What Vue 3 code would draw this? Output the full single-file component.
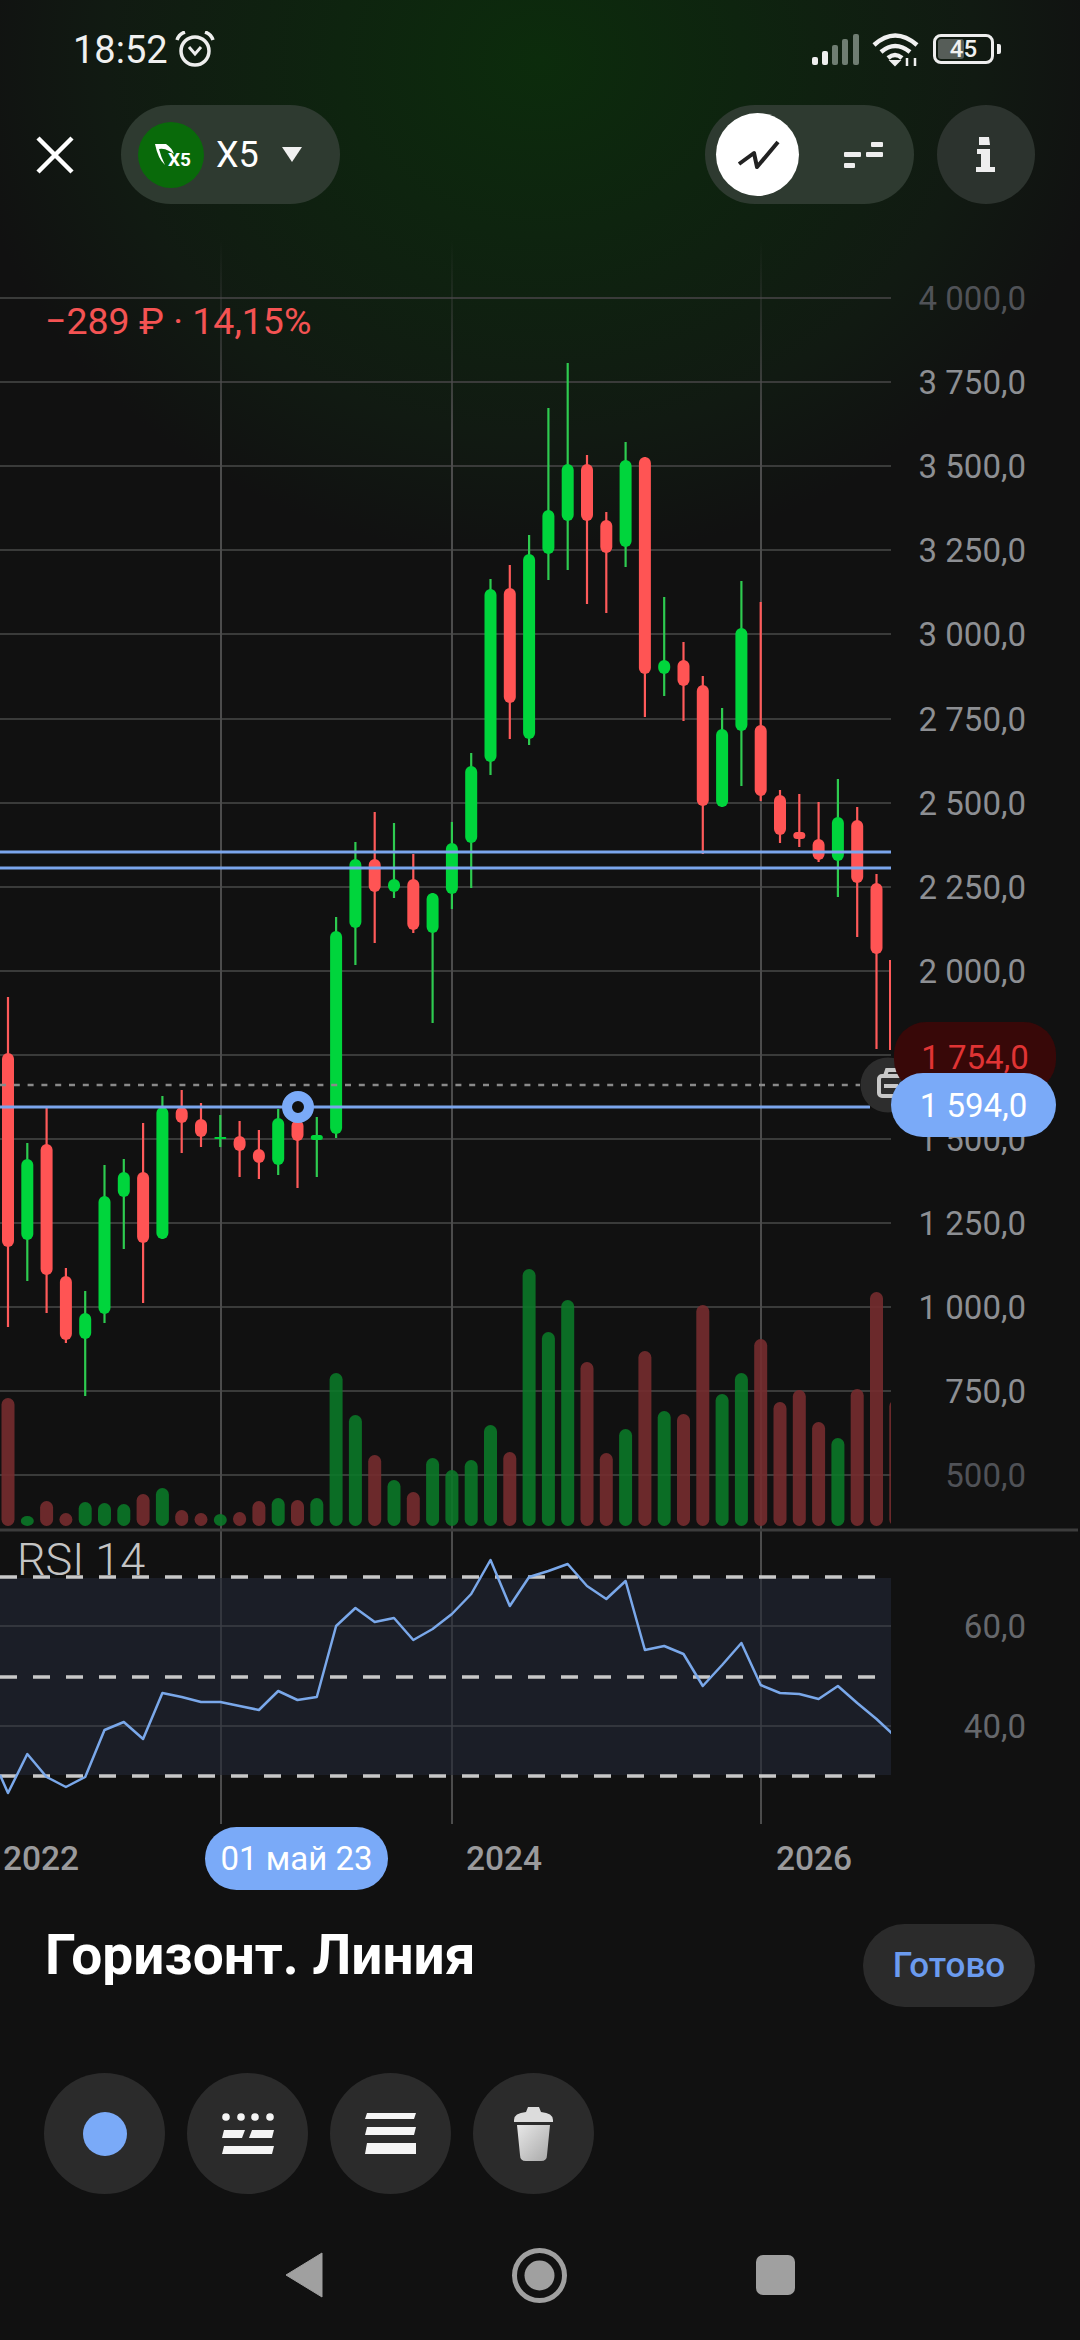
<template>
  <div class="screen">
    <!-- status bar -->
    <div class="status-bar">
      <div class="status-left">
        <span class="clock">18:52</span>
        <svg class="alarm" width="42" height="37" viewBox="0 0 42 37" fill="none" stroke="#eee">
          <circle cx="21" cy="20" r="14" stroke-width="3.5" />
          <path d="M15 16l6 7 6-7" stroke-width="3" />
          <path d="M3 9 Q5 3 11 1" stroke-width="3.5" />
          <path d="M39 9 Q37 3 31 1" stroke-width="3.5" />
        </svg>
      </div>
      <div class="status-right">
        <svg width="48" height="32" viewBox="0 0 48 32">
          <rect x="1" y="24" width="6" height="8" rx="2" fill="#eee" />
          <rect x="11" y="18" width="6" height="14" rx="2" fill="#eee" />
          <rect x="21" y="12" width="6" height="20" rx="2" fill="#6f7d72" />
          <rect x="31" y="6" width="6" height="26" rx="2" fill="#6f7d72" />
          <rect x="42" y="1" width="6" height="31" rx="2" fill="#6f7d72" />
        </svg>
        <svg class="wifi" width="48" height="34" viewBox="0 0 48 34" fill="none" stroke="#f0f0f0" stroke-width="4.5">
          <path d="M2 12 Q23 -7 45 12" />
          <path d="M9 19 Q23 7 38 19" />
          <path d="M16 25 Q23 19 30 25" />
          <path d="M19 28 L23 32 L27 28 Z" fill="#f0f0f0" stroke-width="2" />
          <path d="M35 25 V33 M43 25 V33" stroke-width="2.5" />
        </svg>
        <div class="battery">
          <div class="battery-body">
            <div class="battery-fill"></div>
            <span class="battery-text">45</span>
          </div>
          <div class="battery-tip"></div>
        </div>
      </div>
    </div>

    <!-- top bar -->
    <div class="top-bar">
      <svg class="close" width="40" height="38" viewBox="0 0 40 38">
        <path d="M3 2 L37 36 M37 2 L3 36" stroke="#fff" stroke-width="4.5" />
      </svg>
      <div class="ticker">
        <svg class="logo" width="66" height="66" viewBox="0 0 66 66">
          <circle cx="33" cy="33" r="33" fill="#096a0a" />
          <path d="M17 22 H28 Q34 26 36 32 L31 29 Q26 26 21 27 Q23 35 27 43 Q20 37 17 22 Z" fill="#fff" />
          <text x="30" y="44" class="logo-text">X5</text>
        </svg>
        <span class="ticker-name">X5</span>
        <span class="ticker-caret"></span>
      </div>
      <div class="segment">
        <div class="segment-on">
          <svg width="44" height="34" viewBox="0 0 44 34" fill="none">
            <path d="M3 26 L18 15 L21 29 L42 4" stroke="#222" stroke-width="4" stroke-linejoin="round" />
          </svg>
        </div>
        <svg class="segment-off" width="40" height="26" viewBox="0 0 40 26" fill="#eee">
          <rect x="27" y="0" width="12" height="5" rx="1" />
          <rect x="0" y="10" width="17" height="5" rx="1" />
          <rect x="22" y="10" width="17" height="5" rx="1" />
          <rect x="0" y="21" width="11" height="5" rx="1" />
        </svg>
      </div>
      <div class="info">
        <svg width="20" height="36" viewBox="0 0 20 36" fill="#eee">
          <path d="M3 0 H13 L14 8 H3 Z" />
          <path d="M1 12 H14 V30 H19 V35 H0 V30 H5 V17 H1 Z" />
        </svg>
      </div>
    </div>

    <!-- chart canvas, in screen coordinates -->
    <div class="chart">
      <svg class="chart-svg" width="1080" height="1620" viewBox="0 204 1080 1620">
        <defs>
          <clipPath id="plot"><rect x="0" y="204" width="891" height="1620" /></clipPath>
          <linearGradient id="vfade" gradientUnits="userSpaceOnUse" x1="0" y1="240" x2="0" y2="440">
            <stop offset="0" stop-color="#4c4c4c" stop-opacity="0" />
            <stop offset="1" stop-color="#4c4c4c" />
          </linearGradient>
        </defs>

        <line v-for="l in yLabels" :key="'g' + l.y" x1="0" x2="891" :y1="l.y" :y2="l.y" class="grid" />
        <line v-for="x in [221, 452, 761]" :key="x" :x1="x" :x2="x + 0.01" y1="240" y2="1824" class="vgrid" />
        <text v-for="l in yLabels" :key="l.text" x="1026" :y="l.y + 12" class="y-label" :class="{ faded: l.faded }">{{ l.text }}</text>

        <g clip-path="url(#plot)">
          <rect
            v-for="(v, i) in volumes"
            :key="'v' + i"
            :x="xOf(i) - 6.5"
            :y="v[0]"
            width="13"
            :height="1526 - v[0]"
            rx="6.5"
            :class="v[1] === 'g' ? 'vol-up' : 'vol-down'"
          />
          <g v-for="(c, i) in candles" :key="'c' + i" :class="c[4] === 'g' ? 'up' : 'down'">
            <line :x1="xOf(i)" :x2="xOf(i)" :y1="c[0]" :y2="c[3]" class="wick" />
            <rect :x="xOf(i) - 6" :y="c[1]" width="12" :height="c[2] - c[1]" :rx="Math.min(6, (c[2] - c[1]) / 2)" class="body" />
          </g>
          <!-- last candle is cut by the plot edge, only its wick shows -->
          <line x1="890" x2="890" y1="960" y2="1050" class="last-wick" />
        </g>

        <line x1="0" x2="860" y1="1085" y2="1085" class="dotted" />
        <line x1="0" x2="891" y1="852" y2="852" class="level" />
        <line x1="0" x2="891" y1="868" y2="868" class="level" />
        <line x1="0" x2="870" y1="1107" y2="1107" class="level thin" />
        <circle cx="298" cy="1107" r="11" class="handle" />

        <circle cx="888" cy="1085" r="27.5" fill="#2d2d2d" />
        <g fill="none" stroke="#c8c8c8" stroke-width="4">
          <rect x="879" y="1076" width="26" height="20" rx="3" />
          <path d="M885 1076 L887 1070 H899 L901 1076" />
          <path d="M884 1086 H898" />
        </g>

        <!-- RSI pane -->
        <line x1="0" x2="1078" y1="1530" y2="1530" class="separator" />
        <rect x="0" y="1578" width="891" height="197" fill="#1b1e27" />
        <line v-for="y in [1626, 1726]" :key="y" x1="0" x2="891" :y1="y" :y2="y" class="rsi-grid" />
        <line v-for="x in [221, 452, 761]" :key="'r' + x" :x1="x" :x2="x + 0.01" y1="1578" y2="1775" class="rsi-vgrid" />
        <text x="17" y="1575" class="rsi-title">RSI 14</text>
        <line v-for="y in [1577, 1677, 1776]" :key="'d' + y" x1="0" x2="875" :y1="y" :y2="y" class="rsi-dash" />
        <polyline :points="rsiPoints" class="rsi-line" clip-path="url(#plot)" />
        <text x="1026" y="1638" class="rsi-label">60,0</text>
        <text x="1026" y="1738" class="rsi-label">40,0</text>
      </svg>

      <div class="pnl">−289 ₽ · 14,15%</div>
      <div class="tag tag-last">1 754,0</div>
      <div class="tag tag-level">1 594,0</div>
    </div>

    <!-- date axis -->
    <div class="x-axis">
      <span class="year">2022</span>
      <span class="date-pill">01 май 23</span>
      <span class="year y2024">2024</span>
      <span class="year y2026">2026</span>
    </div>

    <!-- drawing tool sheet -->
    <div class="sheet-head">
      <h1 class="sheet-title">Горизонт. Линия</h1>
      <button class="done">Готово</button>
    </div>
    <div class="tools">
      <div class="tool"><span class="color-dot"></span></div>
      <div class="tool">
        <svg width="52" height="42" viewBox="0 0 52 42" fill="#f4f4f4">
          <circle cx="4" cy="4" r="3.8" /><circle cx="19" cy="4" r="3.8" /><circle cx="33" cy="4" r="3.8" /><circle cx="48" cy="4" r="3.8" />
          <path d="M2 17 H23 L20 25 H0 Z" />
          <path d="M30 17 H52 L50 25 H27 Z" />
          <path d="M2 33 H52 L50 41 H0 Z" />
        </svg>
      </div>
      <div class="tool">
        <svg width="51" height="42" viewBox="0 0 51 42" fill="#f4f4f4">
          <path d="M2 0 H51 L49 6 H0 Z" />
          <path d="M2 14 H51 L49 22 H0 Z" />
          <path d="M2 30 H51 V41 H0 Z" />
        </svg>
      </div>
      <div class="tool">
        <svg width="40" height="54" viewBox="0 0 40 54">
          <defs>
            <linearGradient id="bin" x1="0" y1="0" x2="1" y2="1">
              <stop offset="0" stop-color="#e8e8e8" />
              <stop offset="1" stop-color="#a8a8a8" />
            </linearGradient>
          </defs>
          <path d="M14 0 H25 L27 5 Q39 6 39 13 V15 H0 V13 Q0 6 12 5 Z" fill="#dcdcdc" />
          <path d="M3 18 H36 L33 48 Q33 54 27 54 H12 Q6 54 6 48 Z" fill="url(#bin)" />
        </svg>
      </div>
    </div>

    <!-- android nav -->
    <div class="nav-bar">
      <svg width="38" height="46" viewBox="0 0 38 46"><path d="M37 1 V45 L1 23 Z" fill="#a0a0a0" stroke="#a0a0a0" stroke-linejoin="round" /></svg>
      <svg width="55" height="55" viewBox="0 0 55 55">
        <circle cx="27.5" cy="27.5" r="25" fill="none" stroke="#a0a0a0" stroke-width="5" />
        <circle cx="27.5" cy="27.5" r="15" fill="#a0a0a0" />
      </svg>
      <span class="nav-square"></span>
    </div>
  </div>
</template>

<script setup>
const step = 84.1
const yValues = [
  '4 000,0', '3 750,0', '3 500,0', '3 250,0', '3 000,0', '2 750,0', '2 500,0', '2 250,0',
  '2 000,0', '1 750,0', '1 500,0', '1 250,0', '1 000,0', '750,0', '500,0',
]
const yLabels = yValues.map((text, i) => ({
  text,
  y: Math.round(298 + step * i),
  faded: i === 0 || i === yValues.length - 1,
}))

const xOf = (i) => 8 + 19.3 * i

// high, body top, body bottom, low, direction (screen y)
const candles = [
  [997, 1053, 1247, 1327, 'r'], [1143, 1159, 1240, 1281, 'g'], [1106, 1144, 1275, 1313, 'r'],
  [1268, 1276, 1340, 1343, 'r'], [1291, 1313, 1339, 1396, 'g'], [1165, 1196, 1314, 1323, 'g'],
  [1159, 1172, 1197, 1249, 'g'], [1123, 1172, 1243, 1303, 'r'], [1096, 1107, 1239, 1239, 'g'],
  [1090, 1107, 1123, 1153, 'r'], [1103, 1119, 1137, 1147, 'r'], [1115, 1137, 1139, 1147, 'g'],
  [1121, 1136, 1151, 1177, 'r'], [1130, 1149, 1163, 1179, 'r'], [1109, 1118, 1165, 1175, 'g'],
  [1107, 1120, 1141, 1188, 'r'], [1117, 1135, 1140, 1177, 'g'], [917, 931, 1134, 1138, 'g'],
  [842, 859, 928, 965, 'g'], [812, 859, 892, 943, 'r'], [823, 879, 892, 898, 'g'],
  [854, 879, 930, 933, 'r'], [893, 893, 933, 1023, 'g'], [822, 843, 894, 909, 'g'],
  [753, 766, 843, 888, 'g'], [579, 589, 762, 775, 'g'], [565, 588, 703, 739, 'r'],
  [535, 554, 739, 745, 'g'], [408, 510, 554, 580, 'g'], [363, 464, 521, 570, 'g'],
  [455, 464, 521, 604, 'r'], [512, 520, 553, 613, 'r'], [442, 460, 547, 567, 'g'],
  [457, 457, 674, 717, 'r'], [597, 660, 674, 696, 'g'], [642, 660, 686, 721, 'r'],
  [676, 685, 806, 854, 'r'], [708, 729, 807, 807, 'g'], [581, 628, 731, 786, 'g'],
  [602, 725, 796, 801, 'r'], [790, 795, 835, 843, 'r'], [794, 832, 839, 847, 'r'],
  [802, 839, 860, 862, 'r'], [779, 817, 861, 897, 'g'], [807, 820, 883, 937, 'r'],
  [874, 883, 954, 1049, 'r'],
]

// bar top, direction; the baseline is y 1526
const volumes = [
  [1398, 'r'], [1516, 'g'], [1501, 'r'], [1513, 'r'], [1502, 'g'], [1503, 'g'], [1504, 'g'], [1494, 'r'],
  [1488, 'g'], [1510, 'r'], [1513, 'r'], [1514, 'g'], [1512, 'r'], [1501, 'r'], [1498, 'g'], [1500, 'r'],
  [1498, 'g'], [1373, 'g'], [1415, 'g'], [1455, 'r'], [1480, 'g'], [1492, 'r'], [1458, 'g'], [1470, 'g'],
  [1460, 'g'], [1425, 'g'], [1452, 'r'], [1269, 'g'], [1332, 'g'], [1300, 'g'], [1362, 'r'], [1453, 'r'],
  [1429, 'g'], [1351, 'r'], [1411, 'g'], [1414, 'r'], [1305, 'r'], [1394, 'g'], [1373, 'g'], [1339, 'r'],
  [1402, 'r'], [1390, 'r'], [1422, 'r'], [1438, 'g'], [1389, 'r'], [1292, 'r'], [1400, 'r'],
]

const rsi = [
  1793, 1754, 1777, 1787, 1777, 1730, 1722, 1739, 1693, 1697, 1702, 1702, 1706, 1710, 1691, 1700,
  1697, 1626, 1608, 1622, 1618, 1640, 1629, 1614, 1594, 1560, 1606, 1577, 1571, 1564, 1586, 1599,
  1581, 1650, 1646, 1654, 1686, 1665, 1643, 1685, 1693, 1694, 1699, 1686, 1703, 1719, 1737,
]
const rsiPoints = '0,1775 ' + rsi.map((y, i) => `${xOf(i).toFixed(1)},${y}`).join(' ')
</script>

<style scoped>
.screen {
  width: 1080px;
  height: 2340px;
  display: flex;
  flex-direction: column;
  overflow: hidden;
  font-family: Roboto, "Noto Sans", sans-serif;
  background: radial-gradient(ellipse 580px 500px at 540px 60px, #0c2c0c 0%, #0e240f 35%, #111a12 75%, rgba(17, 17, 17, 0) 100%), #111111;
}

/* status bar */
.status-bar {
  height: 98px;
  flex: none;
  display: flex;
  align-items: center;
  justify-content: space-between;
  padding: 0 79px 0 73px;
  color: #f0f0f0;
}
.status-left {
  display: flex;
  align-items: center;
  gap: 6px;
}
.clock {
  font-size: 38px;
  margin-top: 2px;
}
.status-right {
  display: flex;
  align-items: center;
  gap: 13px;
}
.wifi {
  margin-top: 1px;
}
.battery {
  display: flex;
  align-items: center;
  gap: 3px;
}
.battery-body {
  position: relative;
  width: 61px;
  height: 30px;
  box-sizing: border-box;
  border: 3px solid #eee;
  border-radius: 8px;
  display: flex;
  align-items: center;
  justify-content: center;
}
.battery-fill {
  position: absolute;
  left: 2px;
  top: 2px;
  bottom: 2px;
  width: 26px;
  background: #565d58;
  border-radius: 3px;
}
.battery-text {
  position: relative;
  font-size: 24px;
  font-weight: 500;
  color: #f0f0f0;
}
.battery-tip {
  width: 4px;
  height: 10px;
  background: #eee;
  border-radius: 0 2px 2px 0;
}

/* top bar */
.top-bar {
  height: 99px;
  flex: none;
  margin-top: 7px;
  display: flex;
  align-items: center;
  padding: 0 45px 0 35px;
}
.close {
  margin-right: 46px;
}
.ticker {
  width: 219px;
  height: 99px;
  box-sizing: border-box;
  padding-left: 17px;
  border-radius: 50px;
  background: #2e3a30;
  display: flex;
  align-items: center;
}
.logo-text {
  font-family: Roboto, sans-serif;
  font-size: 19px;
  font-weight: 700;
  fill: #fff;
}
.ticker-name {
  margin-left: 12px;
  font-size: 36px;
  color: #fff;
}
.ticker-caret {
  margin-left: 23px;
  width: 0;
  height: 0;
  border-left: 10px solid transparent;
  border-right: 10px solid transparent;
  border-top: 15px solid #f0f0f0;
}
.segment {
  margin-left: auto;
  width: 209px;
  height: 99px;
  box-sizing: border-box;
  padding-left: 11px;
  border-radius: 50px;
  background: #2e3a30;
  display: flex;
  align-items: center;
}
.segment-on {
  width: 83px;
  height: 83px;
  border-radius: 50%;
  background: #fff;
  display: flex;
  align-items: center;
  justify-content: center;
}
.segment-off {
  margin-left: 45px;
}
.info {
  margin-left: 23px;
  width: 98px;
  height: 99px;
  border-radius: 50%;
  background: #2c332e;
  display: flex;
  align-items: center;
  justify-content: center;
}

/* chart */
.chart {
  position: relative;
  height: 1620px;
  flex: none;
}
.chart-svg {
  display: block;
}
.grid {
  stroke: #3a3b3a;
  stroke-width: 2;
}
.vgrid {
  stroke: url(#vfade);
  stroke-width: 2;
}
.y-label {
  font-family: Roboto, sans-serif;
  font-size: 33px;
  text-anchor: end;
  fill: #8d8f93;
}
.y-label.faded {
  fill: #505257;
}
.wick {
  stroke-width: 2.2;
}
.up .wick {
  stroke: #2ecb50;
}
.up .body {
  fill: #00d53c;
}
.down .wick {
  stroke: #ff5a5a;
}
.down .body {
  fill: #ff5454;
}
.last-wick {
  stroke: #ff5a5a;
  stroke-width: 2;
}
.vol-up {
  fill: #0a7a28;
  fill-opacity: 0.88;
}
.vol-down {
  fill: #762c2f;
  fill-opacity: 0.9;
}
.dotted {
  stroke: #8a8a8a;
  stroke-width: 2.5;
  stroke-dasharray: 6 7.8;
}
.level {
  stroke: #7ba5ec;
  stroke-width: 3;
}
.level.thin {
  stroke-width: 3;
}
.handle {
  fill: #111;
  stroke: #7aaaf8;
  stroke-width: 10;
}
.separator {
  stroke: #3c3c3c;
  stroke-width: 3;
}
.rsi-grid {
  stroke: #33363d;
  stroke-width: 2;
}
.rsi-vgrid {
  stroke: #3c3f47;
  stroke-width: 1.5;
}
.rsi-title {
  font-family: Roboto, sans-serif;
  font-size: 45px;
  font-weight: 300;
  fill: #c4c4c4;
}
.rsi-dash {
  stroke: #c8c8c8;
  stroke-width: 3.5;
  stroke-dasharray: 17 16;
}
.rsi-line {
  fill: none;
  stroke: #7aa8ea;
  stroke-width: 2.5;
  stroke-linejoin: round;
}
.rsi-label {
  font-family: Roboto, sans-serif;
  font-size: 33px;
  text-anchor: end;
  fill: #66686c;
}
.pnl {
  position: absolute;
  left: 45px;
  top: 95px;
  font-size: 37.5px;
  line-height: 44px;
  color: #f45353;
}
.tag {
  position: absolute;
  display: flex;
  align-items: center;
  justify-content: center;
  font-size: 33px;
  border-radius: 32px;
}
.tag-last {
  left: 894px;
  top: 818px;
  width: 162px;
  height: 70px;
  background: #380808;
  color: #e03434;
}
.tag-level {
  left: 891px;
  top: 869px;
  width: 165px;
  height: 64px;
  background: #7aaaf8;
  color: #fff;
}

/* date axis */
.x-axis {
  height: 69px;
  flex: none;
  box-sizing: border-box;
  padding: 3px 0 3px 3px;
  display: flex;
  align-items: center;
}
.year {
  width: 75px;
  font-size: 33.5px;
  font-weight: 500;
  color: #9a9a9c;
}
.y2024 {
  margin-left: 78px;
}
.y2026 {
  margin-left: 235px;
}
.date-pill {
  margin-left: 127px;
  width: 183px;
  height: 63px;
  border-radius: 32px;
  background: #7aaaf8;
  color: #fff;
  font-size: 33px;
  display: flex;
  align-items: center;
  justify-content: center;
}

/* tool sheet */
.sheet-head {
  height: 114px;
  flex: none;
  box-sizing: border-box;
  padding: 31px 45px 0 45px;
  display: flex;
  align-items: flex-start;
  justify-content: space-between;
}
.sheet-title {
  margin: 0;
  font-size: 55px;
  font-weight: 700;
  line-height: 62px;
  color: #fff;
}
.done {
  width: 172px;
  height: 83px;
  border: none;
  border-radius: 42px;
  background: #2b2b2b;
  color: #6b9bef;
  font-family: inherit;
  font-size: 35px;
  font-weight: 500;
}
.tools {
  flex: none;
  margin-top: 66px;
  padding-left: 44px;
  display: flex;
  gap: 22px;
}
.tool {
  width: 121px;
  height: 121px;
  border-radius: 50%;
  background: #2b2b2b;
  display: flex;
  align-items: center;
  justify-content: center;
}
.color-dot {
  width: 44px;
  height: 44px;
  border-radius: 50%;
  background: #7aaaf8;
}

/* nav */
.nav-bar {
  height: 146px;
  flex: none;
  box-sizing: border-box;
  padding-top: 16px;
  display: flex;
  align-items: center;
  justify-content: center;
  gap: 189px;
}
.nav-square {
  width: 39px;
  height: 40px;
  border-radius: 7px;
  background: #a0a0a0;
}
</style>
